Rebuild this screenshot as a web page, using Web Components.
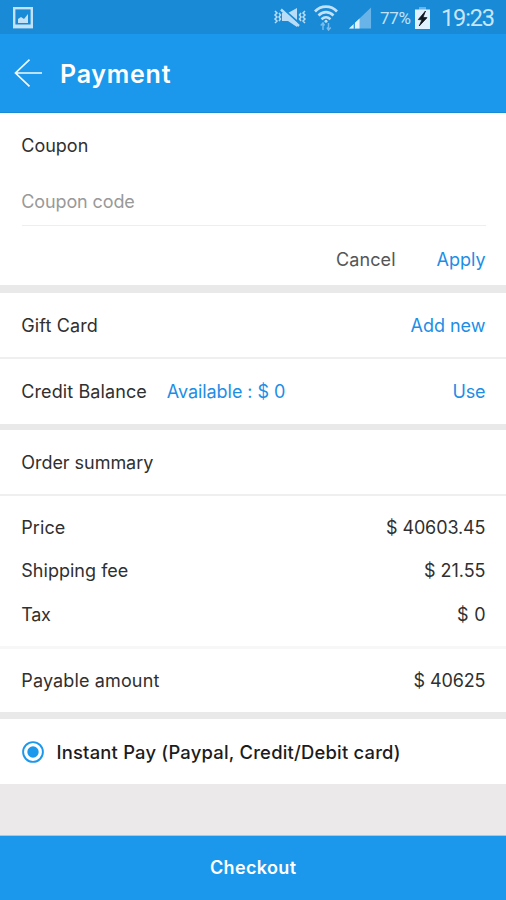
<!DOCTYPE html>
<html lang="en">
<head>
<meta charset="utf-8">
<title>Payment</title>
<style>
  html, body { margin: 0; height: 100%; }
  body { font-family: Inter, Roboto, "Liberation Sans", sans-serif; background: #ebe9ea; overflow: hidden; }
</style>
</head>
<body>
<payment-screen></payment-screen>
<script>
const define = (name, html, Base = HTMLElement) => {
  const template = document.createElement('template');
  template.innerHTML = html.trim();
  customElements.define(name, class extends Base {
    constructor() {
      super();
      this.attachShadow({ mode: 'open' }).append(template.content.cloneNode(true));
    }
  });
};

// A single-line label whose tracking is adjusted to fill its "width" attribute.
class Label extends HTMLElement {
  connectedCallback() {
    const width = Number(this.getAttribute('width'));
    const nodes = this.shadowRoot.querySelector('slot').assignedNodes({ flatten: true });
    const count = nodes.map(n => n.textContent).join('').trim().length;
    if (!width || count < 2) return;
    this.style.letterSpacing = '0px';
    const natural = this.getBoundingClientRect().width;
    const step = (width - natural) / (count - 1);
    this.style.letterSpacing = step + 'px';
    this.style.marginRight = -step + 'px';
  }
}
define('ui-label', `
  <style>
    :host { display: inline-block; flex: none; white-space: nowrap; font-size: 18px; line-height: 24px; color: #303030; font-weight: 400; }
    :host([tone="link"]) { color: #1d8ee6; }
    :host([tone="muted"]) { color: #999; }
    :host([tone="soft"]) { color: #555; }
    :host([tone="strong"]) { font-size: 18.4px; font-weight: 500; color: #1c1c1c; }
    :host([tone="title"]) { font-size: 25px; line-height: 32px; padding-top: 2px; font-weight: 600; color: #fff; }
    :host([tone="button"]) { font-size: 18px; font-weight: 600; color: #fff; }
    :host([tone="percent"]) { font-family: Roboto, sans-serif; font-size: 17px; color: #c3e2f8; }
    :host([tone="clock"]) { font-family: Roboto, sans-serif; font-size: 23.5px; line-height: 26px; color: #c9e5f9; }
  </style><slot></slot>`, Label);

define('status-bar', `
  <style>
    :host { display: flex; align-items: center; height: 34px; box-sizing: border-box; padding: 1px 11px 0 13px; background: #188ad6; }
    svg { display: block; flex: none; }
    .gap { flex: 1; }
    .wifi { margin-left: 7px; } .signal { margin-left: 11px; }
    .pct { margin-left: 8px; } .battery { margin-left: 4px; margin-right: 11px; }
  </style>
  <svg width="20" height="22" viewBox="0 0 20 22"><rect x="1.2" y="1.2" width="17.6" height="19" fill="none" stroke="#c3e2f8" stroke-width="2.4"/><path d="M1 18.500h18" stroke="#c3e2f8" stroke-width="2"/><path d="M5 16v-4l3-2 3 2 4-5v9z" fill="#c3e2f8"/></svg>
  <span class="gap"></span>
  <svg width="34" height="22" viewBox="0 0 34 22" fill="none" stroke="#b9ddf6" stroke-width="1.5"><path d="M2 4l2 2-2 2 2 2-2 2 2 2-2 2M6 6l1.500 2L6 10l1.500 2L6 14M32 4l-2 2 2 2-2 2 2 2-2 2 2 2M28 6l-1.500 2 1.500 2-1.500 2 1.500 2"/><path d="M9 6h6l9-5v19l-9-6H9z" fill="#b9ddf6" stroke="none"/><path d="M10 2l17 15" stroke="#188ad6" stroke-width="2"/><path d="M8 2.500l18 16.500" stroke-width="2.400"/></svg>
  <svg class="wifi" width="24" height="26" viewBox="0 0 24 26" fill="none" stroke="#c3e2f8" stroke-width="2.600"><path d="M1 6.500C7 0 17 0 23 6.500M4.500 10.500C9 6 15 6 19.500 10.500M7.500 14.200c3-2.600 6-2.600 9 0"/><circle cx="12" cy="16.300" r="1.500" fill="#c3e2f8" stroke="none"/><path d="M9 18v7M6.700 20.500L9 18l1.500 2.500M14.500 18v7M13 22.500l1.500 2.500 2.300-2.500" stroke="#76bcec" stroke-width="1.500"/></svg>
  <svg class="signal" width="23" height="24" viewBox="0 0 24 24"><path d="M0 23L23 1v22z" fill="#68b4e8"/><path d="M0 23l5-4.800V23zM6 23v-5.700l5-4.800V23z" fill="#e0f2fd"/><path d="M5.500 15v8" stroke="#188ad6"/></svg>
  <ui-label class="pct" tone="percent" width="31">77%</ui-label>
  <svg class="battery" width="15" height="22" viewBox="0 0 15 22"><path d="M4 0h7v3H4z" fill="#68b4e8"/><path d="M0 2.500h15V22H0z" fill="#e0f2fd"/><path d="M10.500 4L3.300 12.600l3.700.2L4.200 19 12 10.700 8 10.300z" fill="#101820" stroke="#101820" stroke-width=".8"/></svg>
  <ui-label tone="clock" width="54">19:23</ui-label>`);

define('app-header', `
  <style>
    :host { display: flex; align-items: center; height: 79px; box-sizing: border-box; padding-left: 14px; gap: 18px; background: #1b97eb; border-bottom: 1px solid #178bd3; }
    svg { display: block; }
  </style>
  <svg width="28" height="28" viewBox="0 0 28 28" fill="none" stroke="#f2faff" stroke-width="1.700"><path d="M15.500 .7L1.500 14l14 13.300M1.500 14H28"/></svg>
  <ui-label tone="title" width="110.500"><slot></slot></ui-label>`);

define('list-row', `
  <style>
    :host { display: flex; align-items: center; justify-content: space-between; height: 64px; box-sizing: border-box; padding: 1px 20.5px 0 21.300px; background: #fff; }
    .lead { display: flex; align-items: center; }
    :host([compact]) { height: 43.3px; }
  </style>
  <div class="lead"><slot></slot></div><slot name="end"></slot>`);

define('rule-line', `
  <style>:host { display: block; height: 2px; background: #efefef; } :host([wide]) { height: 7px; background: #e9e9e9; }</style>`);

define('coupon-form', `
  <style>
    :host { display: flex; flex-direction: column; height: 172px; box-sizing: border-box; padding: 20.5px 20.5px 0 21.300px; background: #fff; }
    .title { display: flex; height: 24px; }
    .field { display: flex; align-items: center; height: 68.5px; box-sizing: border-box; padding-top: 22px; margin-left: .7px; border-bottom: 1px solid #eee; }
    .field ui-label { margin-left: -.7px; }
    .actions { display: flex; justify-content: flex-end; gap: 41px; padding-top: 21.500px; }
  </style>
  <div class="title"><ui-label width="67">Coupon</ui-label></div>
  <div class="field"><ui-label tone="muted" width="113.500">Coupon code</ui-label></div>
  <div class="actions"><ui-label tone="soft" width="59.500">Cancel</ui-label><ui-label tone="link" width="49">Apply</ui-label></div>`);

define('radio-mark', `
  <style>:host { display: block; width: 22px; height: 22px; margin: 0 12.500px 0 .7px; } svg { display: block; }</style>
  <svg width="22" height="22" viewBox="0 0 22 22"><circle cx="11" cy="11" r="9.900" fill="none" stroke="#1b97eb" stroke-width="1.900"/><circle cx="11" cy="11" r="5.700" fill="#1b97eb"/></svg>`);

define('checkout-button', `
  <style>:host { display: flex; align-items: center; justify-content: center; height: 64px; margin-top: auto; background: #1b97eb; box-shadow: 0 -1px #9dccea; }</style>
  <ui-label tone="button" width="86"><slot></slot></ui-label>`);

define('payment-screen', `
  <style>
    :host { display: flex; flex-direction: column; height: 900px; background: #ebe9ea; }
    .available { margin-left: 20px; }
    .totals { background: #fff; padding: 10px 0; }
    .balance { height: 65px; padding-top: 0; }
    .payable { height: 63px; }
    .method { height: 65px; }
    .gift-gap { height: 8px; }
    .balance-gap { height: 6px; }
    .faint { height: 3px; background: #f7f7f7; }
  </style>
  <status-bar></status-bar>
  <app-header>Payment</app-header>
  <coupon-form></coupon-form>
  <rule-line wide class="gift-gap"></rule-line>
  <list-row><ui-label width="76.500">Gift Card</ui-label><ui-label slot="end" tone="link" width="75">Add new</ui-label></list-row>
  <rule-line></rule-line>
  <list-row class="balance"><ui-label width="125.500">Credit Balance</ui-label><ui-label class="available" tone="link" width="118.500">Available : $ 0</ui-label><ui-label slot="end" tone="link" width="33">Use</ui-label></list-row>
  <rule-line wide class="balance-gap"></rule-line>
  <list-row><ui-label width="132">Order summary</ui-label></list-row>
  <rule-line></rule-line>
  <div class="totals">
    <list-row compact><ui-label width="44">Price</ui-label><ui-label slot="end" width="99.500">$ 40603.45</ui-label></list-row>
    <list-row compact><ui-label width="107">Shipping fee</ui-label><ui-label slot="end" width="61.500">$ 21.55</ui-label></list-row>
    <list-row compact><ui-label width="29.500">Tax</ui-label><ui-label slot="end" width="28.500">$ 0</ui-label></list-row>
  </div>
  <rule-line class="faint"></rule-line>
  <list-row class="payable"><ui-label width="138">Payable amount</ui-label><ui-label slot="end" width="72">$ 40625</ui-label></list-row>
  <rule-line wide></rule-line>
  <list-row class="method"><radio-mark></radio-mark><ui-label tone="strong" width="344">Instant Pay (Paypal, Credit/Debit card)</ui-label></list-row>
  <checkout-button>Checkout</checkout-button>`);
</script>
</body>
</html>
